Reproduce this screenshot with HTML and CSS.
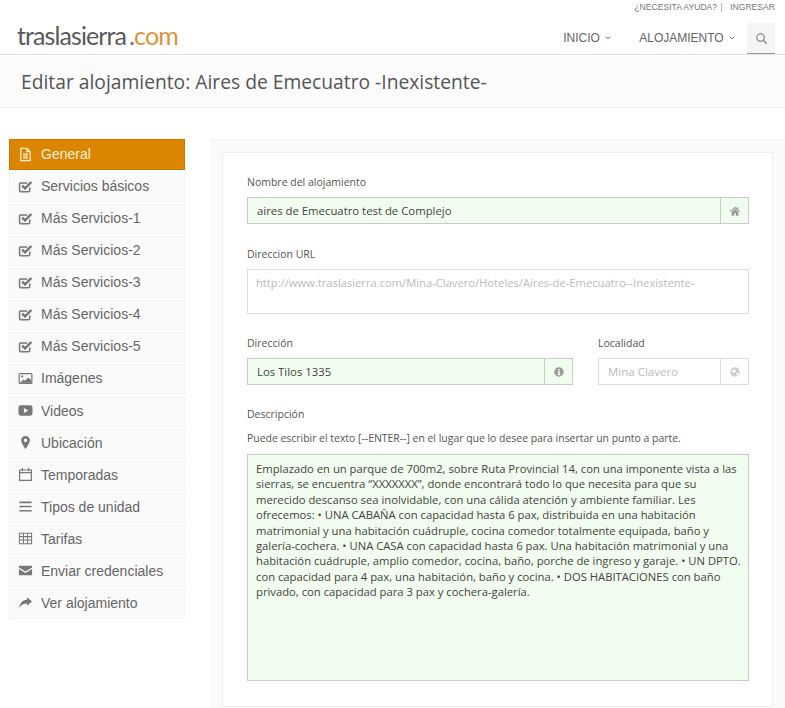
FILE: index.html
```html
<!DOCTYPE html>
<html lang="es">
<head>
<meta charset="utf-8">
<title>Editar alojamiento</title>
<link rel="stylesheet" href="styles.css">
</head>
<body>
<header class="header">
  <div class="toplinks"><span>¿NECESITA AYUDA?</span><span class="sep"></span><span>INGRESAR</span></div>
  <div class="navrow">
    <div class="logo">traslasierra<span class="logo-com"><span class="logo-dot">.</span>com</span></div>
    <nav class="nav">
      <span class="nav-item">INICIO <svg class="caret" viewBox="0 0 8 5"><path d="M1 1l3 2.6L7 1" fill="none" stroke="currentColor" stroke-width="1.2"/></svg></span>
      <span class="nav-item">ALOJAMIENTO <svg class="caret" viewBox="0 0 8 5"><path d="M1 1l3 2.6L7 1" fill="none" stroke="currentColor" stroke-width="1.2"/></svg></span>
      <span class="nav-search"><svg viewBox="0 0 14 14" class="search-icon"><circle cx="6" cy="6" r="4" fill="none" stroke="currentColor" stroke-width="1.6"/><path d="M9 9l3.6 3.6" stroke="currentColor" stroke-width="2"/></svg></span>
    </nav>
  </div>
</header>
<div class="titlebar"><h1>Editar alojamiento: Aires de Emecuatro -Inexistente-</h1></div>
<div class="content">
  <aside class="sidebar">
    <a class="side-item active"><svg class="ico" viewBox="0 0 16 16"><path d="M3 1.500h6.500L13 5v9.500H3z M9.500 1.500V5H13 M5.500 7.500h5 M5.500 9.700h5 M5.500 11.900h5" fill="none" stroke="currentColor" stroke-width="1.300"/></svg>General</a>
    <a class="side-item"><svg class="ico" viewBox="0 0 16 16"><use href="#chk"/></svg>Servicios básicos</a>
    <a class="side-item"><svg class="ico" viewBox="0 0 16 16"><use href="#chk"/></svg>Más Servicios-1</a>
    <a class="side-item"><svg class="ico" viewBox="0 0 16 16"><use href="#chk"/></svg>Más Servicios-2</a>
    <a class="side-item"><svg class="ico" viewBox="0 0 16 16"><use href="#chk"/></svg>Más Servicios-3</a>
    <a class="side-item"><svg class="ico" viewBox="0 0 16 16"><use href="#chk"/></svg>Más Servicios-4</a>
    <a class="side-item"><svg class="ico" viewBox="0 0 16 16"><use href="#chk"/></svg>Más Servicios-5</a>
    <a class="side-item"><svg class="ico" viewBox="0 0 16 16"><rect x="1.200" y="2.700" width="13.600" height="10.600" rx="1" fill="none" stroke="currentColor" stroke-width="1.300"/><circle cx="4.500" cy="5.800" r="1.200" fill="currentColor"/><path d="M2 12.500l4-3.500 1.500 1.500L11 7l3 2.500v3z" fill="currentColor"/></svg>Imágenes</a>
    <a class="side-item"><svg class="ico" viewBox="0 0 16 16"><path d="M3 2.500h10a2.500 2.500 0 0 1 2.500 2.500v6a2.500 2.500 0 0 1-2.500 2.500H3A2.500 2.500 0 0 1 .5 11V5A2.500 2.500 0 0 1 3 2.500zM6.300 5.300v5.400L11 8z" fill="currentColor" fill-rule="evenodd"/></svg>Videos</a>
    <a class="side-item"><svg class="ico" viewBox="0 0 16 16"><path d="M8 1a4.700 4.700 0 0 1 4.700 4.700C12.700 8.800 8 15 8 15S3.300 8.800 3.300 5.700A4.700 4.700 0 0 1 8 1zm0 2.800a1.900 1.900 0 1 0 0 3.800 1.900 1.900 0 0 0 0-3.800z" fill="currentColor" fill-rule="evenodd"/></svg>Ubicación</a>
    <a class="side-item"><svg class="ico" viewBox="0 0 16 16"><path d="M1.700 3.200h12.600v11H1.700z M1.700 6h12.600 M4.700 1v3.500 M11.300 1v3.500" fill="none" stroke="currentColor" stroke-width="1.300"/></svg>Temporadas</a>
    <a class="side-item"><svg class="ico" viewBox="0 0 16 16"><path d="M1.500 3.500h13M1.500 8h13M1.500 12.500h13" stroke="currentColor" stroke-width="1.800"/></svg>Tipos de unidad</a>
    <a class="side-item"><svg class="ico" viewBox="0 0 16 16"><path d="M1.500 2.500h13v11h-13z M1.500 6h13 M1.500 9.700h13 M5.800 2.500v11 M10.200 2.500v11" fill="none" stroke="currentColor" stroke-width="1.100"/></svg>Tarifas</a>
    <a class="side-item"><svg class="ico" viewBox="0 0 16 16"><path d="M1 3h14v1.800L8 9 1 4.800zM1 6.500l7 4.200 7-4.200V13H1z" fill="currentColor"/></svg>Enviar credenciales</a>
    <a class="side-item"><svg class="ico" viewBox="0 0 16 16"><path d="M9.500 2.500L15 7l-5.500 4.500V9C6 9 3.500 10 1.500 13.500 1.700 9 4.500 5.200 9.500 5z" fill="currentColor"/></svg>Ver alojamiento</a>
  </aside>
  <main class="panel">
    <form class="card">
      <div class="field">
        <label class="label">Nombre del alojamiento</label>
        <div class="group valid h28">
          <div class="control dark">aires de Emecuatro test de Complejo</div>
          <span class="addon"><svg class="addon-ico" viewBox="0 0 14 14"><path d="M7 2L1 7.300l.8.900L7 3.700l5.200 4.500.8-.9-2.300-2V2.500H9.200v1.400zM3 8.200V12.500h3V9.500h2v3h3V8.200L7 4.800z" fill="currentColor"/></svg></span>
        </div>
      </div>
      <div class="field">
        <label class="label">Direccion URL</label>
        <div class="group url">http://www.traslasierra.com/Mina-Clavero/Hoteles/Aires-de-Emecuatro--Inexistente-</div>
      </div>
      <div class="field-row">
        <div class="field col-main">
          <label class="label">Dirección</label>
          <div class="group valid h28">
            <div class="control dark">Los Tilos 1335</div>
            <span class="addon"><svg class="addon-ico" viewBox="0 0 14 14"><path d="M7 1.500a5.500 5.500 0 1 0 0 11 5.500 5.500 0 0 0 0-11zM6 3.500h2v1.800H6zM5.500 6.200H8v3.300h.7v1.200H5.400V9.500H6V7.400h-.5z" fill="currentColor" fill-rule="evenodd"/></svg></span>
          </div>
        </div>
        <div class="field col-side">
          <label class="label">Localidad</label>
          <div class="group h28">
            <div class="control muted">Mina Clavero</div>
            <span class="addon"><svg class="addon-ico pale" viewBox="0 0 14 14"><path d="M7 1.500a5.500 5.500 0 1 0 0 11 5.500 5.500 0 0 0 0-11zM3 6l2-2 2.500 .5L8 6.500 6 8 4.500 7.500zM8.500 8.500l2 -.5 1 1-2 2.300z" fill="currentColor" fill-rule="evenodd"/></svg></span>
          </div>
        </div>
      </div>
      <div class="field field-desc">
        <label class="label">Descripción</label>
        <p class="hint">Puede escribir el texto [--ENTER--] en el lugar que lo desee para insertar un punto a parte.</p>
        <div class="textarea">Emplazado en un parque de 700m2, sobre Ruta Provincial 14, con una imponente vista a las sierras, se encuentra “XXXXXXX”, donde encontrará todo lo que necesita para que su merecido descanso sea inolvidable, con una cálida atención y ambiente familiar. Les ofrecemos: • UNA CABAÑA con capacidad hasta 6 pax, distribuida en una habitación matrimonial y una habitación cuádruple, cocina comedor totalmente equipada, baño y galería-cochera. • UNA CASA con capacidad hasta 6 pax. Una habitación matrimonial y una habitación cuádruple, amplio comedor, cocina, baño, porche de ingreso y garaje. • UN DPTO. con capacidad para 4 pax, una habitación, baño y cocina. • DOS HABITACIONES con baño privado, con capacidad para 3 pax y cochera-galería.</div>
      </div>
    </form>
  </main>
</div>
<svg class="defs" aria-hidden="true"><symbol id="chk" viewBox="0 0 16 16"><path d="M12.500 9v3.200a1.300 1.300 0 0 1-1.300 1.300H3a1.300 1.300 0 0 1-1.300-1.300V5.500A1.300 1.300 0 0 1 3 4.200h7" fill="none" stroke="currentColor" stroke-width="1.600"/><path d="M4.500 7L7.500 10 14.300 3.200" fill="none" stroke="currentColor" stroke-width="2.600"/></symbol></svg>
</body>
</html>
```
FILE: styles.css
```css
* { box-sizing: border-box; }
html, body { margin: 0; height: 708px; overflow: hidden; background: #fff; }
body { font-family: "Open Sans", sans-serif; color: #555; }
.defs { width: 0; height: 0; position: absolute; }

.header { height: 55px; border-bottom: 1px solid #e3e3e3; padding: 0 10px 0 17px; display: flex; flex-direction: column; }
.toplinks { display: flex; justify-content: flex-end; align-items: center; gap: 4px; height: 14px; font: 8.600px "Liberation Sans", sans-serif; color: #777; }
.sep { width: 1px; height: 9px; background: #bbb; margin-right: 4px; }
.navrow { display: flex; justify-content: space-between; align-items: flex-start; height: 40px; }
.logo { font: 400 25px/1 Lato, sans-serif; color: #5a5a5a; letter-spacing: -0.900px; margin-top: 9px; white-space: nowrap; }
.logo-com { color: #dd933a; margin-left: 3px; }
.logo-dot { color: #777; }
.nav { display: flex; align-items: flex-start; }
.nav-item { font: 12px/28px "Liberation Sans", sans-serif; color: #666; margin: 10px 28px 0 0; white-space: nowrap; }
.nav-item + .nav-item { margin-right: 12px; }
.caret { width: 6px; height: 4px; margin: 0 0 2px 2px; }
.nav-search { width: 28px; height: 31px; margin-top: 9px; background: #f5f5f5; border-bottom: 1px solid #999; display: flex; align-items: center; justify-content: center; color: #999; }
.search-icon { width: 13px; height: 13px; }

.titlebar { height: 53px; background: #fcfcfc; border-bottom: 1px solid #efefef; padding: 0 21px; display: flex; align-items: center; }
h1 { margin: 0; font: 400 19.250px "Open Sans", sans-serif; color: #555; white-space: nowrap; }

.content { display: flex; padding: 31px 0 0 9px; gap: 25px; }
.sidebar { width: 177px; display: flex; flex-direction: column; gap: 2.070px; }
.side-item { height: 30px; display: flex; align-items: center; background: #fafafa; border: 1px solid #f3f3f3; font: 14px "Liberation Sans", sans-serif; color: #666; padding: 0 0 2px 8px; white-space: nowrap; }
.side-item.active { height: 31px; padding-bottom: 1px; background: #db8500; border-color: #c97b00; color: #fdf0dc; }
.ico { width: 15px; height: 15px; margin-right: 8px; color: #777; flex: none; }
.active .ico { color: #fdf0dc; }

.panel { flex: 1; background: #fafafa; border-top: 1px solid #f3f3f3; padding: 12px 12px 0; height: 569px; }
.card { background: #fff; border: 1px solid #efefef; height: 555px; padding: 19px 23px 0 24px; display: flex; flex-direction: column; }
.field { display: flex; flex-direction: column; }
.label { font-size: 10.500px; line-height: 20px; color: #555; margin-bottom: 5px; }
.field + .field { margin-top: 20px; }
.field-row { margin-top: 19px; display: flex; gap: 25px; }
.group { display: flex; border: 1px solid #ddd; background: #fff; }
.h28 { height: 27px; }
.group.valid { background: #f1fdee; border-color: #c5cec2; }
.control { flex: 1; font-size: 11.350px; line-height: 25px; padding-left: 9px; white-space: nowrap; }
.dark { color: #444; }
.muted { color: #bbb; font-size: 11.500px; }
.addon { width: 28px; border-left: 1px solid #ddd; display: flex; align-items: center; justify-content: center; color: #999; }
.valid .addon { border-left-color: #c5cec2; }
.addon-ico { width: 12px; height: 12px; }
.pale { color: #ccc; }
.url { height: 45px; font-size: 11.200px; line-height: 26px; padding-left: 8px; color: #bbb; white-space: nowrap; }
.col-main { width: 326px; }
.col-side { width: 151px; }
.col-side.field { margin-top: 0; }
.field.field-desc { margin-top: 19px; }
.hint { margin: 0 0 7px; font-size: 10.430px; line-height: 18px; color: #555; white-space: nowrap; }
.textarea { height: 227px; background: #f1fdee; border: 1px solid #c5cec2; padding: 6px 4px 6px 8px; font-size: 11.250px; line-height: 15.400px; color: #444; }
```
